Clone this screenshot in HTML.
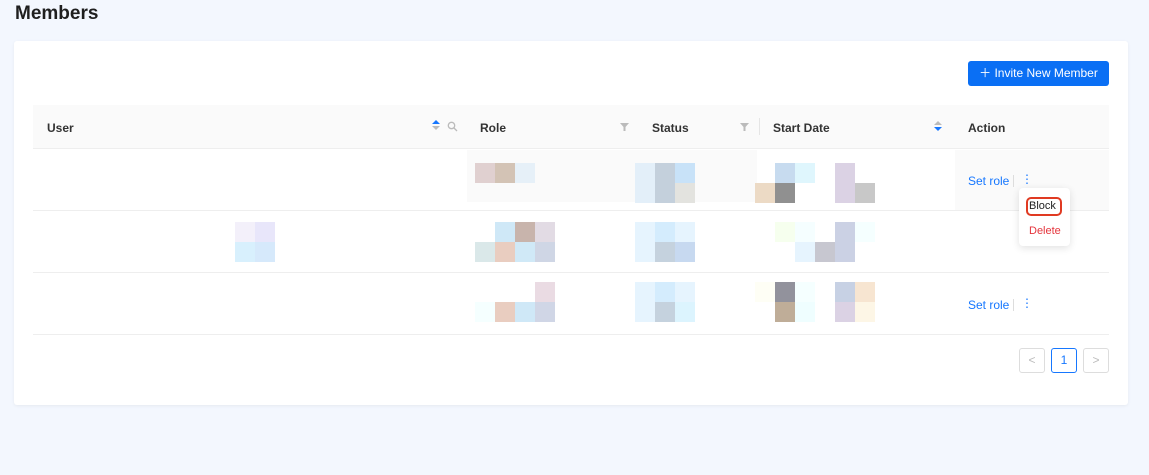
<!DOCTYPE html>
<html><head><style>
*{box-sizing:border-box;margin:0;padding:0}
body{width:1149px;height:475px;background:#f3f7fe;font-family:"Liberation Sans",sans-serif;position:relative;overflow:hidden;color:#1f1f1f}
.a{position:absolute}
.t{font-size:12px;font-weight:bold;color:#333}
.b{position:absolute;width:20px;height:20px}
.ln{position:absolute;height:1px;background:#eee}
</style></head><body>
<div class="a" style="left:15px;top:3px;font-size:19px;font-weight:bold;color:#1f1f1f">Members</div>
<div class="a" style="left:14px;top:41px;width:1114px;height:364px;background:#fff;border-radius:3px;box-shadow:0 1px 3px rgba(0,0,0,.06)"></div>
<div class="a" style="left:968px;top:61px;width:141px;height:25px;background:#0a6ff4;border-radius:3px;color:#fff;font-size:12px;line-height:25px;text-align:center">＋ Invite New Member</div>
<div class="a" style="left:33px;top:105px;width:1076px;height:44px;background:#fafafa;border-bottom:1px solid #eee"></div>
<div class="a t" style="left:47px;top:121px">User</div>
<div class="a" style="left:432px;top:120px;width:0;height:0;border:4px solid transparent;border-bottom:4px solid #1677ff;border-top:0"></div>
<div class="a" style="left:432px;top:126px;width:0;height:0;border:4px solid transparent;border-top:4px solid #bbb;border-bottom:0"></div>
<svg class="a" style="left:447px;top:121px" width="11" height="11" viewBox="0 0 11 11"><circle cx="4.5" cy="4.5" r="3.2" fill="none" stroke="#bbb" stroke-width="1.3"/><path d="M7 7l3 3" stroke="#bbb" stroke-width="1.3"/></svg>
<div class="a t" style="left:480px;top:121px">Role</div>
<svg class="a" style="left:620px;top:123px" width="9" height="8" viewBox="0 0 9 8"><path d="M0 0h9L5.5 4v4h-2V4z" fill="#bbb"/></svg>
<div class="a t" style="left:652px;top:121px">Status</div>
<svg class="a" style="left:740px;top:123px" width="9" height="8" viewBox="0 0 9 8"><path d="M0 0h9L5.5 4v4h-2V4z" fill="#bbb"/></svg>
<div class="a" style="left:759px;top:118px;width:1px;height:17px;background:#e5e5e5"></div>
<div class="a t" style="left:773px;top:121px">Start Date</div>
<div class="a" style="left:934px;top:121px;width:0;height:0;border:4px solid transparent;border-bottom:4px solid #bbb;border-top:0"></div>
<div class="a" style="left:934px;top:127px;width:0;height:0;border:4px solid transparent;border-top:4px solid #1677ff;border-bottom:0"></div>
<div class="a t" style="left:968px;top:121px">Action</div>
<div class="a" style="left:467px;top:150px;width:290px;height:52px;background:#fafafa"></div>
<div class="a" style="left:955px;top:150px;width:154px;height:60px;background:#fafafa"></div>
<div class="ln" style="left:33px;top:210px;width:1076px"></div>
<div class="ln" style="left:33px;top:272px;width:1076px"></div>
<div class="ln" style="left:33px;top:334px;width:1076px"></div>
<div class="a" style="left:968px;top:174px;font-size:12px;color:#1677ff">Set role</div>
<div class="a" style="left:1013px;top:175px;width:1px;height:12px;background:#ddd"></div>
<div class="a" style="left:1021px;top:172px;font-size:12px;color:#1677ff">⋮</div>
<div class="a" style="left:968px;top:298px;font-size:12px;color:#1677ff">Set role</div>
<div class="a" style="left:1013px;top:299px;width:1px;height:12px;background:#ddd"></div>
<div class="a" style="left:1021px;top:296px;font-size:12px;color:#1677ff">⋮</div>
<div class="a" style="left:1019px;top:188px;width:51px;height:58px;background:#fff;border-radius:4px;box-shadow:0 2px 8px rgba(0,0,0,.12)"></div>
<div class="a" style="left:1026px;top:197px;width:36px;height:19px;border:2px solid #e03a22;border-radius:5px"></div>
<div class="a" style="left:1029px;top:200px;font-size:11px;color:#222">Block</div>
<div class="a" style="left:1029px;top:225px;font-size:11px;color:#e5343c">Delete</div>
<div class="a" style="left:1019px;top:348px;width:26px;height:25px;border:1px solid #ddd;border-radius:3px;color:#bbb;font-size:12px;text-align:center;line-height:23px">&lt;</div>
<div class="a" style="left:1051px;top:348px;width:26px;height:25px;border:1px solid #1677ff;border-radius:3px;color:#1677ff;font-size:12px;text-align:center;line-height:23px">1</div>
<div class="a" style="left:1083px;top:348px;width:26px;height:25px;border:1px solid #ddd;border-radius:3px;color:#bbb;font-size:12px;text-align:center;line-height:23px">&gt;</div>
<div class="b" style="left:475px;top:163px;background:#e0d0d0"></div>
<div class="b" style="left:495px;top:163px;background:#d3c3b5"></div>
<div class="b" style="left:515px;top:163px;background:#e6f0f8"></div>
<div class="b" style="left:635px;top:163px;background:#e3eff9"></div>
<div class="b" style="left:655px;top:163px;background:#c4d0dc"></div>
<div class="b" style="left:675px;top:163px;background:#c8e2f8"></div>
<div class="b" style="left:635px;top:183px;background:#e3eff9"></div>
<div class="b" style="left:655px;top:183px;background:#c4d0dc"></div>
<div class="b" style="left:675px;top:183px;background:#e3e3df"></div>
<div class="b" style="left:755px;top:183px;background:#ecdac5"></div>
<div class="b" style="left:775px;top:163px;background:#c7dbef"></div>
<div class="b" style="left:775px;top:183px;background:#909090"></div>
<div class="b" style="left:795px;top:163px;background:#dff6fd"></div>
<div class="b" style="left:835px;top:163px;background:#dbd2e4"></div>
<div class="b" style="left:835px;top:183px;background:#dbd2e4"></div>
<div class="b" style="left:855px;top:183px;background:#c8c8c8"></div>
<div class="b" style="left:235px;top:222px;background:#f3f0fa"></div>
<div class="b" style="left:255px;top:222px;background:#e8e6fa"></div>
<div class="b" style="left:235px;top:242px;background:#d8f0fd"></div>
<div class="b" style="left:255px;top:242px;background:#d6e9fb"></div>
<div class="b" style="left:495px;top:222px;background:#cfe8f7"></div>
<div class="b" style="left:515px;top:222px;background:#c8b4ac"></div>
<div class="b" style="left:535px;top:222px;background:#e2dbe4"></div>
<div class="b" style="left:475px;top:242px;background:#dae8e9"></div>
<div class="b" style="left:495px;top:242px;background:#e9cdc0"></div>
<div class="b" style="left:515px;top:242px;background:#d0e9f7"></div>
<div class="b" style="left:535px;top:242px;background:#cfd6e5"></div>
<div class="b" style="left:635px;top:222px;background:#e6f4fe"></div>
<div class="b" style="left:655px;top:222px;background:#d4ecfd"></div>
<div class="b" style="left:675px;top:222px;background:#e6f4fe"></div>
<div class="b" style="left:635px;top:242px;background:#e6f4fe"></div>
<div class="b" style="left:655px;top:242px;background:#c5d2de"></div>
<div class="b" style="left:675px;top:242px;background:#c7d9f0"></div>
<div class="b" style="left:775px;top:222px;background:#f6ffee"></div>
<div class="b" style="left:795px;top:222px;background:#f5feff"></div>
<div class="b" style="left:835px;top:222px;background:#cbd1e4"></div>
<div class="b" style="left:855px;top:222px;background:#f5ffff"></div>
<div class="b" style="left:795px;top:242px;background:#e6f4fe"></div>
<div class="b" style="left:815px;top:242px;background:#c7c7d0"></div>
<div class="b" style="left:835px;top:242px;background:#cbd1e4"></div>
<div class="b" style="left:535px;top:282px;background:#eadbe3"></div>
<div class="b" style="left:475px;top:302px;background:#f5ffff"></div>
<div class="b" style="left:495px;top:302px;background:#e9cdc0"></div>
<div class="b" style="left:515px;top:302px;background:#cfe8f7"></div>
<div class="b" style="left:535px;top:302px;background:#d0d6e6"></div>
<div class="b" style="left:635px;top:282px;background:#e6f4fe"></div>
<div class="b" style="left:655px;top:282px;background:#d4ecfd"></div>
<div class="b" style="left:675px;top:282px;background:#e6f4fe"></div>
<div class="b" style="left:635px;top:302px;background:#e6f4fe"></div>
<div class="b" style="left:655px;top:302px;background:#c5d2de"></div>
<div class="b" style="left:675px;top:302px;background:#dcf4fe"></div>
<div class="b" style="left:755px;top:282px;background:#fefef5"></div>
<div class="b" style="left:775px;top:282px;background:#92929c"></div>
<div class="b" style="left:795px;top:282px;background:#f5ffff"></div>
<div class="b" style="left:835px;top:282px;background:#c7d1e4"></div>
<div class="b" style="left:855px;top:282px;background:#f7e5d1"></div>
<div class="b" style="left:775px;top:302px;background:#bfad98"></div>
<div class="b" style="left:795px;top:302px;background:#effeff"></div>
<div class="b" style="left:835px;top:302px;background:#dbd2e4"></div>
<div class="b" style="left:855px;top:302px;background:#fdf6e6"></div>
</body></html>
